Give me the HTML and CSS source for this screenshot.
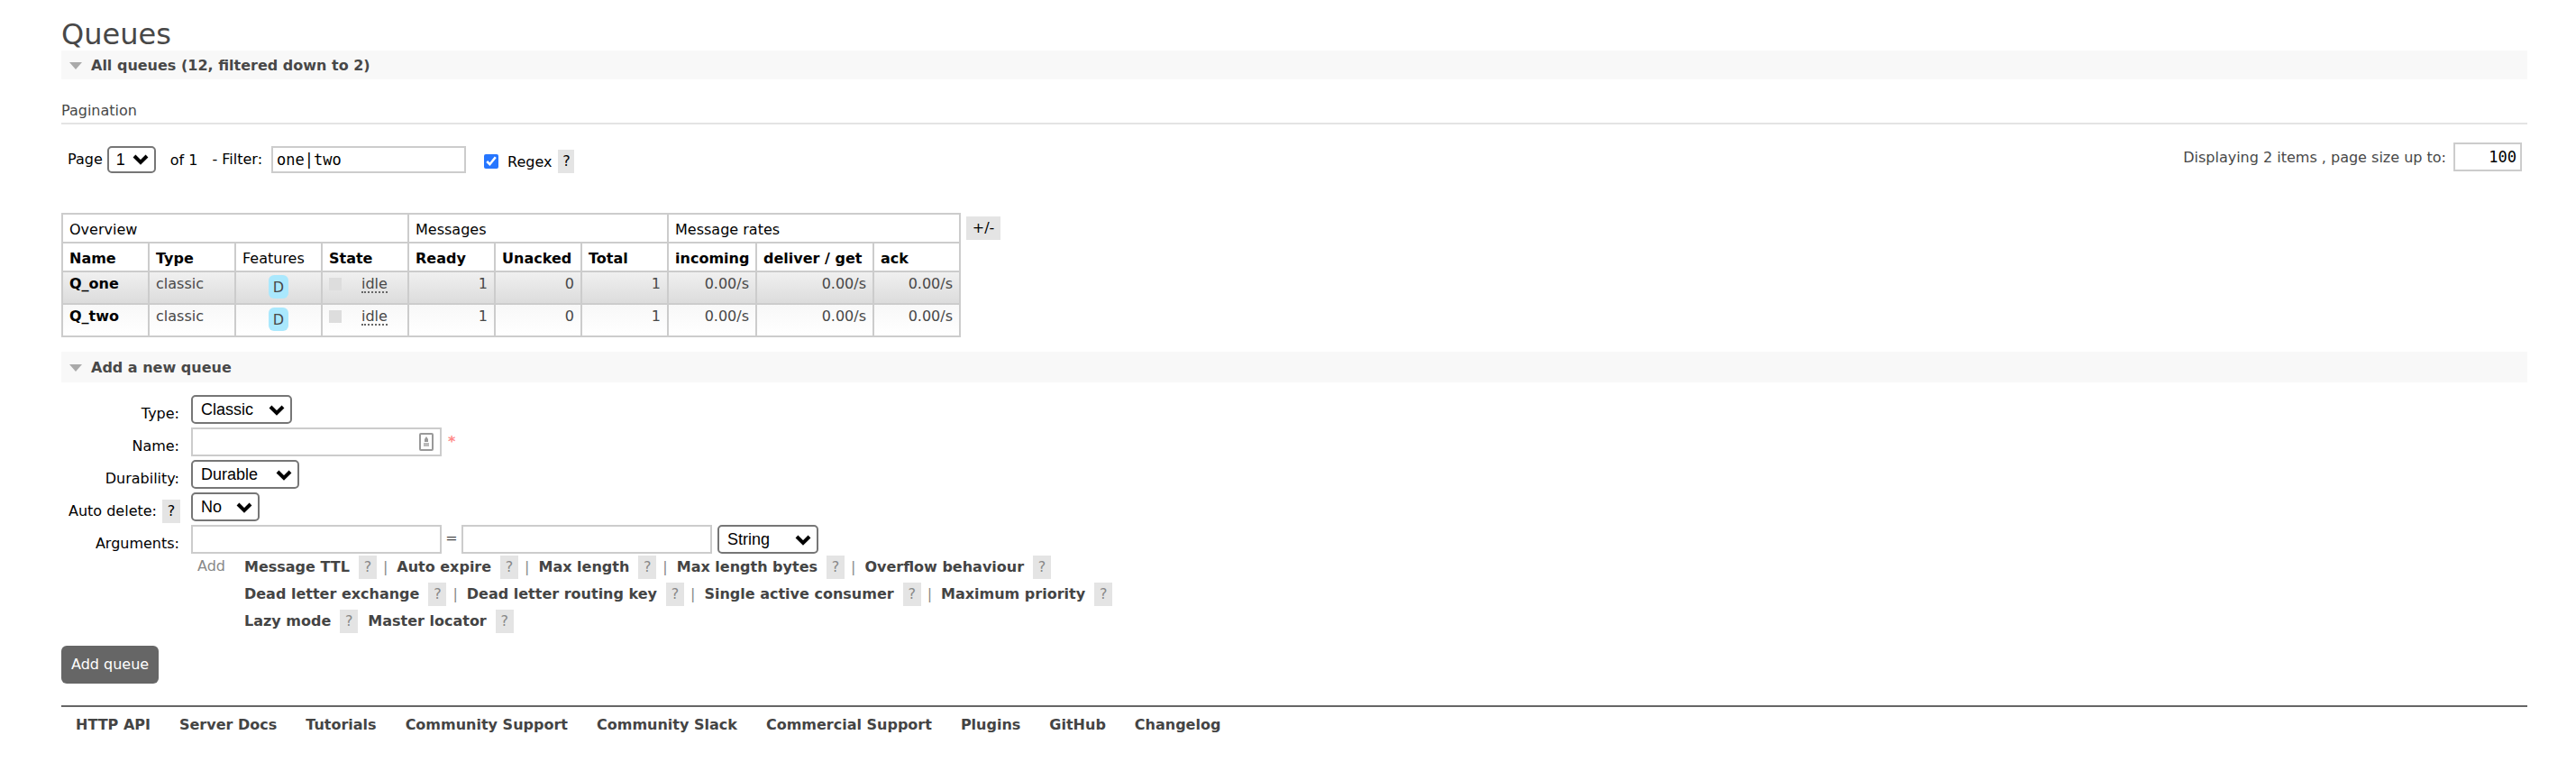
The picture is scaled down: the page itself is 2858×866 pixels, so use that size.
FILE: index.html
```html
<!DOCTYPE html>
<html lang="en">
<head>
<meta charset="utf-8">
<title>Queues</title>
<link rel="stylesheet" href="styles.css">
</head>
<body>
<main>
  <h1>Queues</h1>

  <section>
    <h2 class="band"><svg class="tri" viewBox="0 0 14 8" aria-hidden="true"><path d="M0 0h14L7 8z"/></svg>All queues (12, filtered down to 2)</h2>
    <h3>Pagination</h3>
    <div class="pager">
      <div class="pager-left">
        <label for="page">Page</label>
        <span class="select select-page"><select id="page"><option>1</option></select><svg viewBox="0 0 18 12" aria-hidden="true"><path d="M2 2l7 7 7-7"/></svg></span>
        <span class="of">of 1</span>
        <label for="filter">- Filter:</label>
        <input class="box filter" id="filter" type="text" value="one|two">
        <span class="regex"><input id="regex" type="checkbox" checked><label for="regex">Regex</label><button class="help" type="button">?</button></span>
      </div>
      <div class="pager-right">
        <label for="size">Displaying 2 items , page size up to:</label>
        <input class="box size" id="size" type="text" value="100">
      </div>
    </div>

    <div class="table-wrap">
      <table>
        <colgroup><col class="c"><col class="c"><col class="c"><col class="c"><col class="c"><col class="c"><col class="c"><col class="c-in"><col class="c-get"><col class="c"></colgroup>
        <thead>
          <tr><th class="plain" colspan="4">Overview</th><th class="plain" colspan="3">Messages</th><th class="plain" colspan="3">Message rates</th></tr>
          <tr><th>Name</th><th>Type</th><th class="plain">Features</th><th>State</th><th>Ready</th><th>Unacked</th><th>Total</th><th>incoming</th><th>deliver / get</th><th>ack</th></tr>
        </thead>
        <tbody>
          <tr class="dark"><td><a href="#one">Q_one</a></td><td>classic</td><td class="center"><span class="badge">D</span></td><td><span class="state"><i></i><abbr>idle</abbr></span></td><td class="num">1</td><td class="num">0</td><td class="num">1</td><td class="num">0.00/s</td><td class="num">0.00/s</td><td class="num">0.00/s</td></tr>
          <tr class="light"><td><a href="#two">Q_two</a></td><td>classic</td><td class="center"><span class="badge">D</span></td><td><span class="state"><i></i><abbr>idle</abbr></span></td><td class="num">1</td><td class="num">0</td><td class="num">1</td><td class="num">0.00/s</td><td class="num">0.00/s</td><td class="num">0.00/s</td></tr>
        </tbody>
      </table>
      <button class="help columns" type="button">+/-</button>
    </div>
  </section>

  <section>
    <h2 class="band band-add"><svg class="tri" viewBox="0 0 14 8" aria-hidden="true"><path d="M0 0h14L7 8z"/></svg>Add a new queue</h2>
    <form>
      <div class="row"><div class="name"><label for="type">Type:</label></div>
        <span class="select select-m"><select id="type"><option>Classic</option></select><svg viewBox="0 0 18 12" aria-hidden="true"><path d="M2 2l7 7 7-7"/></svg></span></div>
      <div class="row"><div class="name"><label for="name">Name:</label></div>
        <span class="field"><input class="box wide" id="name" type="text"><svg class="card" viewBox="0 0 16 20" aria-hidden="true"><rect class="frame" x="1" y="1" width="14" height="18" rx="1"/><path d="M8 4l2 3v3H6V7z"/><path class="pale" d="M5 11h6v4H5z"/></svg></span><span class="star">*</span></div>
      <div class="row"><div class="name"><label for="durable">Durability:</label></div>
        <span class="select select-l"><select id="durable"><option>Durable</option></select><svg viewBox="0 0 18 12" aria-hidden="true"><path d="M2 2l7 7 7-7"/></svg></span></div>
      <div class="row"><div class="name"><label for="auto">Auto delete:</label><button class="help" type="button">?</button></div>
        <span class="select select-s"><select id="auto"><option>No</option></select><svg viewBox="0 0 18 12" aria-hidden="true"><path d="M2 2l7 7 7-7"/></svg></span></div>
      <div class="row row-args"><div class="name"><label for="key">Arguments:</label></div>
        <input class="box wide" id="key" type="text"><span class="eq">=</span><input class="box wide" type="text" aria-label="Value">
        <span class="select select-m select-arg"><select aria-label="Argument type"><option>String</option></select><svg viewBox="0 0 18 12" aria-hidden="true"><path d="M2 2l7 7 7-7"/></svg></span></div>
      <div class="presets">
        <span>Add</span>
        <div class="lines">
          <div><a href="#ttl">Message TTL</a><button class="help" type="button">?</button><b>|</b><a href="#expire">Auto expire</a><button class="help" type="button">?</button><b>|</b><a href="#len">Max length</a><button class="help" type="button">?</button><b>|</b><a href="#bytes">Max length bytes</a><button class="help" type="button">?</button><b>|</b><a href="#over">Overflow behaviour</a><button class="help" type="button">?</button></div>
          <div><a href="#dlx">Dead letter exchange</a><button class="help" type="button">?</button><b>|</b><a href="#dlk">Dead letter routing key</a><button class="help" type="button">?</button><b>|</b><a href="#sac">Single active consumer</a><button class="help" type="button">?</button><b>|</b><a href="#prio">Maximum priority</a><button class="help" type="button">?</button></div>
          <div><a href="#lazy">Lazy mode</a><button class="help" type="button">?</button><a class="next" href="#master">Master locator</a><button class="help" type="button">?</button></div>
        </div>
      </div>
      <button class="submit" type="submit">Add queue</button>
    </form>
  </section>

  <footer>
    <a href="#api">HTTP API</a><a href="#docs">Server Docs</a><a href="#tutorials">Tutorials</a><a href="#support">Community Support</a><a href="#slack">Community Slack</a><a href="#commercial">Commercial Support</a><a href="#plugins">Plugins</a><a href="#github">GitHub</a><a href="#changelog">Changelog</a>
  </footer>
</main>
</body>
</html>
```
FILE: styles.css
```css
* { box-sizing: border-box; }
body {
  margin: 0;
  background: #fff;
  color: #484848;
  font: 16px/20px Verdana, "DejaVu Sans", sans-serif;
}
main { padding: 20px 54px 0 68px; }
h1, h2, h3 { margin: 0; }
h1 { font-size: 32px; line-height: 36px; font-weight: 400; }
button, input, select { font: inherit; margin: 0; }
a { color: #444; font-weight: 700; text-decoration: none; }
label { color: #000; white-space: nowrap; }

.band {
  display: flex;
  align-items: center;
  gap: 10px;
  height: 32px;
  padding: 2px 0 0 9px;
  background: #f8f8f8;
  font-size: 16px;
}
.band-add { height: 34px; margin-top: 16px; }
.tri { width: 14px; height: 8px; fill: #aaa; }
h3 {
  margin-top: 25px;
  padding-bottom: 3px;
  border-bottom: 2px solid #e4e4e4;
  font-size: 16px;
  font-weight: 400;
}

.pager { display: flex; justify-content: space-between; padding: 20px 6px 44px 7px; }
.pager-left, .pager-right { display: flex; }
.pager-left { align-items: center; padding-top: 4px; color: #000; }
.pager-left .select { margin: 0 16px 0 5px; }
.of { margin-right: 16px; padding-top: 2px; }
.pager-right { align-items: center; gap: 8px; height: 32px; }
.pager-right label { padding-top: 2px; color: #484848; }
.box {
  height: 32px;
  padding: 0 4px;
  border: 2px solid #ccc;
  background: #fff;
  color: #000;
  font: 17px "DejaVu Sans Mono", monospace;
}
.filter { width: 216px; height: 30px; margin-left: 10px; }
.size { width: 76px; text-align: right; }
.wide { width: 278px; }
.regex { display: flex; align-items: center; margin-left: 20px; padding-top: 4px; }
.regex input { width: 16px; height: 16px; margin-right: 10px; accent-color: #2676ff; }
.regex label { padding-top: 2px; }
.regex .help { width: 18px; margin-left: 7px; }
.help {
  width: 20px;
  height: 26px;
  padding: 0;
  border: 0;
  background: #e4e4e4;
  color: #000;
  text-align: center;
}

.select { position: relative; display: inline-flex; }
.select select {
  appearance: none;
  width: 100%;
  height: 32px;
  padding: 0 9px;
  border: 2px solid #767676;
  border-radius: 5px;
  background: #fff;
  color: #000;
  font: 18px "Liberation Sans", Arial, sans-serif;
}
.select svg {
  position: absolute;
  right: 8px;
  top: 11px;
  width: 18px;
  height: 12px;
  fill: none;
  stroke: #000;
  stroke-width: 4;
  pointer-events: none;
}
.select-page { width: 54px; }
.select-page select { height: 30px; padding: 0 8px; }
.select-page svg { top: 9px; }
.select-s { width: 76px; }
.select-m { width: 112px; }
.select-l { width: 120px; }
.select-arg { margin-left: 6px; }

.table-wrap { display: flex; align-items: flex-start; gap: 6px; }
.help.columns { width: 38px; margin-top: 4px; }
table { width: 998px; table-layout: fixed; border-collapse: collapse; }
.c { width: 96px; }
.c-in { width: 98px; }
.c-get { width: 130px; }
th, td { height: 32px; padding: 0 7px; border: 2px solid #ccc; text-align: left; white-space: nowrap; }
th { color: #000; padding-top: 4px; }
td { height: 36px; padding-bottom: 8px; }
td a { color: #000; }
.plain { font-weight: 400; }
.center { padding-bottom: 2px; text-align: center; }
.num { text-align: right; }
.dark td { background: linear-gradient(#f0f0f0, #dcdcdc); }
.light td { background: linear-gradient(#f8f8f8, #fff); }
.badge {
  display: block;
  width: 22px;
  height: 26px;
  margin: 0 auto;
  padding-top: 4px;
  border-radius: 6px;
  background: #aae8fd;
}
.state { display: flex; align-items: center; gap: 22px; }
.state i { width: 14px; height: 14px; background: #ddd; }
.state abbr { height: 20px; border-bottom: 2px dotted #666; }

form { padding-top: 14px; }
.row { display: flex; height: 36px; align-items: flex-start; }
.row-args { height: 34px; }
.name {
  display: flex;
  justify-content: flex-end;
  align-items: center;
  gap: 6px;
  width: 132px;
  height: 26px;
  margin: 8px 12px 0 0;
}
.name label:last-child { padding-right: 1px; }
.field { position: relative; }
.card { position: absolute; right: 9px; top: 6px; width: 16px; height: 20px; fill: #999; }
.card .frame { fill: #fff; stroke: #999; stroke-width: 2; }
.card .pale { fill: #bbb; }
.star { padding: 6px 7px; color: #f88; font-weight: 700; }
.eq { width: 22px; padding-top: 5px; text-align: center; }
.presets { display: flex; gap: 21px; margin-left: 151px; color: #888; }
.presets > span { padding-top: 2px; }
.lines > div { display: flex; align-items: center; height: 30px; }
.lines > div:first-child { height: 26px; margin-bottom: 2px; }
.lines .help { margin-left: 10px; color: #888; }
.lines b { margin: 0 10px 0 7px; font-weight: 400; }
.lines .next { margin-left: 11px; }
.submit {
  display: block;
  height: 42px;
  margin-top: 12px;
  padding: 0 11px;
  border: 0;
  border-radius: 6px;
  background: #666;
  color: #fff;
}
footer { display: flex; gap: 32px; margin-top: 24px; padding: 10px 16px; border-top: 2px solid #666; }
```
